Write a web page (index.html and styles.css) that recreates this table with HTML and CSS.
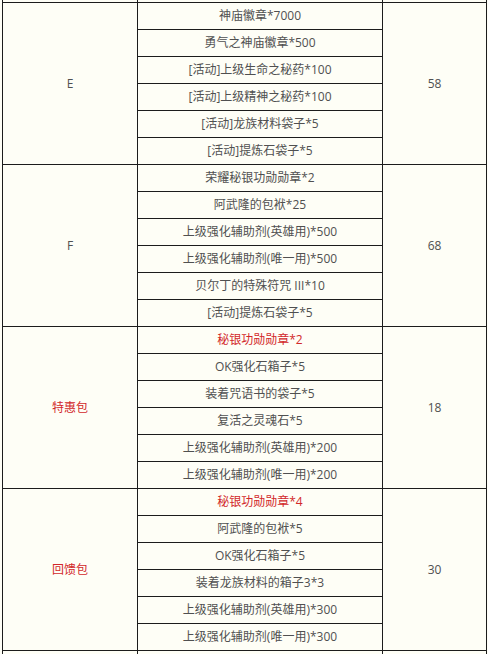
FILE: index.html
```html
<!DOCTYPE html>
<html lang="zh-CN">
<head>
<meta charset="utf-8">
<title>礼包</title>
<link rel="stylesheet" href="styles.css">
</head>
<body>
<table class="pack">
  <colgroup><col class="c1"><col class="c2"><col class="c3"></colgroup>
  <tbody>
    <tr class="cut"><td></td><td></td><td></td></tr>
    <tr><td rowspan="6">E</td><td>神庙徽章*7000</td><td rowspan="6">58</td></tr>
    <tr><td>勇气之神庙徽章*500</td></tr>
    <tr><td>[活动]上级生命之秘药*100</td></tr>
    <tr><td>[活动]上级精神之秘药*100</td></tr>
    <tr><td>[活动]龙族材料袋子*5</td></tr>
    <tr><td>[活动]提炼石袋子*5</td></tr>

    <tr><td rowspan="6">F</td><td>荣耀秘银功勋勋章*2</td><td rowspan="6">68</td></tr>
    <tr><td>阿武隆的包袱*25</td></tr>
    <tr><td>上级强化辅助剂(英雄用)*500</td></tr>
    <tr><td>上级强化辅助剂(唯一用)*500</td></tr>
    <tr><td>贝尔丁的特殊符咒 III*10</td></tr>
    <tr><td>[活动]提炼石袋子*5</td></tr>

    <tr><td rowspan="6" class="red">特惠包</td><td class="red">秘银功勋勋章*2</td><td rowspan="6">18</td></tr>
    <tr><td>OK强化石箱子*5</td></tr>
    <tr><td>装着咒语书的袋子*5</td></tr>
    <tr><td>复活之灵魂石*5</td></tr>
    <tr><td>上级强化辅助剂(英雄用)*200</td></tr>
    <tr><td>上级强化辅助剂(唯一用)*200</td></tr>

    <tr><td rowspan="6" class="red">回馈包</td><td class="red">秘银功勋勋章*4</td><td rowspan="6">30</td></tr>
    <tr><td>阿武隆的包袱*5</td></tr>
    <tr><td>OK强化石箱子*5</td></tr>
    <tr><td>装着龙族材料的箱子3*3</td></tr>
    <tr><td>上级强化辅助剂(英雄用)*300</td></tr>
    <tr><td>上级强化辅助剂(唯一用)*300</td></tr>
    <tr class="cut"><td></td><td></td><td></td></tr>
  </tbody>
</table>
</body>
</html>
```
FILE: styles.css
```css
html, body {
  margin: 0;
  padding: 0;
  background: #fefef6;
  overflow: hidden;
}
.pack {
  border-collapse: collapse;
  table-layout: fixed;
  width: 484px;
  margin-left: 2px;
  margin-top: -1px;
  font-family: "Open Sans", "Noto Sans CJK SC", sans-serif;
  font-size: 12px;
  color: #505050;
}
.c1 { width: 135px; }
.c2 { width: 245px; }
.c3 { width: 104px; }
.pack td {
  border: 1px solid #1c1c1c;
  height: 26px;
  padding: 0;
  text-align: center;
  vertical-align: middle;
  line-height: 16px;
  white-space: nowrap;
}
.pack tr.cut td {
  height: 3px;
  border-top: none;
  border-bottom: none;
}
.pack td.red { color: #d2282a; }
```
